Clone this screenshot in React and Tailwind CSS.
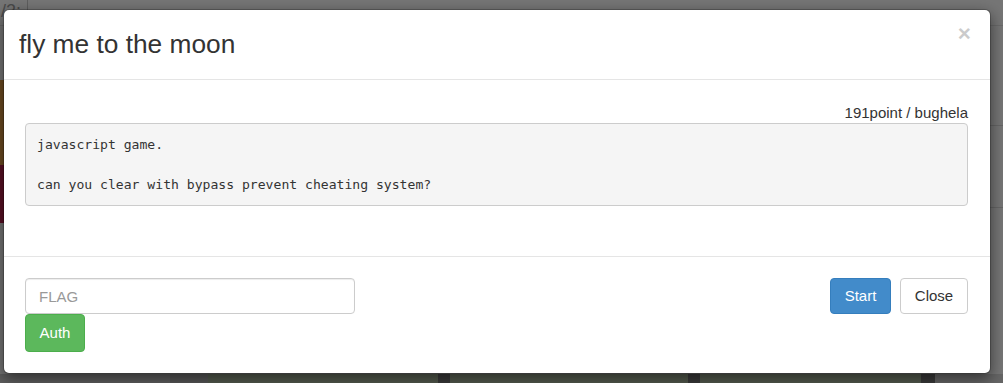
import React from "react";

const sans = { fontFamily: '"Liberation Sans", Arial, sans-serif' };

function Backdrop() {
  return (
    <div className="flex h-[383px] w-full flex-col bg-[#767676]">
      <div className="flex h-[26px] border-b border-[#6a6a6a]">
        <div className="w-[28px] border-r border-[#5e5e5e] pl-[1px] text-[18px] leading-[22px] text-[#4a4a4a]" style={sans}>/2:</div>
        <div className="flex-1" />
      </div>
      <div className="flex flex-1">
        <div className="flex w-[4px] flex-col">
          <div className="h-[54px]" />
          <div className="h-[85px] bg-[#6e4c22]" />
          <div className="h-[58px] bg-[#5b1024]" />
          <div className="flex-1" />
        </div>
        <div className="flex-1" />
        <div className="flex w-[14px] flex-col">
          <div className="h-[100px] border-b border-[#666]" />
          <div className="h-[82px] border-b border-[#666]" />
          <div className="flex-1" />
        </div>
      </div>
      <div className="flex h-[9px]">
        <div className="w-[170px] bg-[#5f5f5f]" />
        <div className="w-[38px] bg-[#575757]" />
        <div className="w-[230px] bg-[#545b4e]" />
        <div className="w-[12px] bg-[#3a3a3a]" />
        <div className="w-[238px] bg-[#545b4e]" />
        <div className="w-[12px] bg-[#3a3a3a]" />
        <div className="w-[221px] bg-[#545b4e]" />
        <div className="w-[14px] bg-[#3a3a3a]" />
        <div className="flex-1 bg-[#666]" />
      </div>
    </div>
  );
}

export default function App() {
  return (
    <div className="relative h-[383px] w-[1003px] overflow-hidden" style={sans}>
      <Backdrop />
      <div className="absolute left-[3px] top-[9px] flex w-[988px] flex-col rounded-[6px] border border-black/20 bg-white shadow-[0_5px_15px_rgba(0,0,0,0.5)] bg-clip-padding">
        <div className="flex h-[70px] items-start justify-between border-b border-[#e5e5e5] pl-[15px] pr-[19px]">
          <h3 className="mt-[20px] text-[26.3px] font-normal leading-[28px] text-[#333]">fly me to the moon</h3>
          <button className="mt-[13px] text-[22.5px] font-bold leading-[22px] text-black opacity-20">×</button>
        </div>
        <div className="flex flex-col pl-[21px] pr-[22px] pt-[22px] pb-[50px]">
          <div className="text-right text-[15px] leading-[21px] text-[#333]">191point / bughela</div>
          <pre
            className="m-0 whitespace-pre-wrap rounded-[4px] border border-[#ccc] bg-[#f5f5f5] px-[11px] pt-[11px] pb-[10px] text-[13.1px] leading-[20px] text-[#333]"
            style={{ fontFamily: '"DejaVu Sans Mono", "Liberation Mono", monospace' }}
          >{"javascript game.\n\ncan you clear with bypass prevent cheating system?"}</pre>
        </div>
        <div className="flex items-start justify-between border-t border-[#e5e5e5] pl-[21px] pr-[22px] pt-[21px] pb-[21px]">
          <div className="flex flex-col items-start">
            <input
              placeholder="FLAG"
              className="h-[36px] w-[330px] rounded-[4px] border border-[#ccc] bg-white px-[13px] text-[15px] text-[#555] placeholder:text-[#999] shadow-[inset_0_1px_1px_rgba(0,0,0,0.075)] outline-none"
            />
            <button className="h-[38px] w-[60px] rounded-[4px] border border-[#4cae4c] bg-[#5cb85c] text-[15px] text-white">Auth</button>
          </div>
          <div className="flex gap-[9px]">
            <button className="h-[36px] w-[61px] rounded-[4px] border border-[#357ebd] bg-[#428bca] text-[15px] text-white">Start</button>
            <button className="h-[36px] w-[68px] rounded-[4px] border border-[#ccc] bg-white text-[15px] text-[#333]">Close</button>
          </div>
        </div>
      </div>
    </div>
  );
}
